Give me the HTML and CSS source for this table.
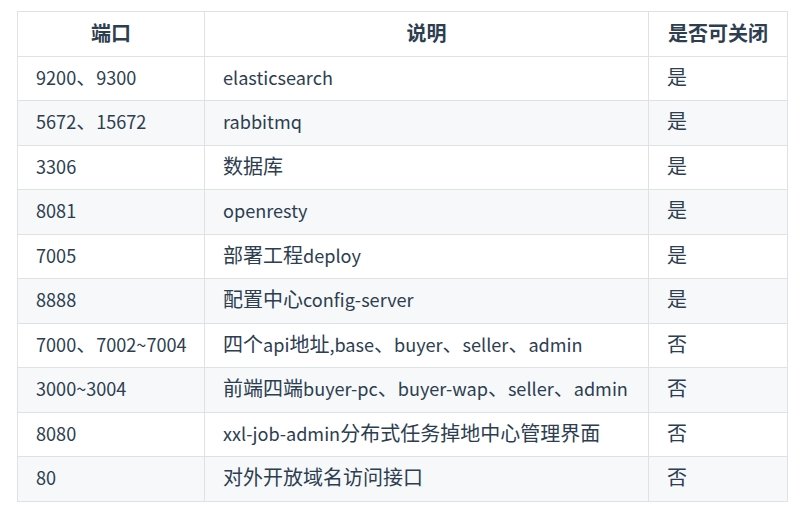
FILE: index.html
```html
<!DOCTYPE html>
<html lang="zh-CN">
<head>
<meta charset="utf-8">
<link rel="stylesheet" href="styles.css">
</head>
<body>
<div class="page">
<table class="ports">
  <colgroup>
    <col class="c1">
    <col class="c2">
    <col class="c3">
  </colgroup>
  <thead>
    <tr><th>端口</th><th>说明</th><th>是否可关闭</th></tr>
  </thead>
  <tbody>
    <tr><td>9200<span class="zh">、</span>9300</td><td>elasticsearch</td><td><span class="zh">是</span></td></tr>
    <tr><td>5672<span class="zh">、</span>15672</td><td>rabbitmq</td><td><span class="zh">是</span></td></tr>
    <tr><td>3306</td><td><span class="zh">数据库</span></td><td><span class="zh">是</span></td></tr>
    <tr><td>8081</td><td>openresty</td><td><span class="zh">是</span></td></tr>
    <tr><td>7005</td><td><span class="zh">部署工程</span>deploy</td><td><span class="zh">是</span></td></tr>
    <tr><td>8888</td><td><span class="zh">配置中心</span>config-server</td><td><span class="zh">是</span></td></tr>
    <tr><td>7000<span class="zh">、</span>7002~7004</td><td><span class="zh">四个</span>api<span class="zh">地址</span>,base<span class="zh">、</span>buyer<span class="zh">、</span>seller<span class="zh">、</span>admin</td><td><span class="zh">否</span></td></tr>
    <tr><td>3000~3004</td><td><span class="zh">前端四端</span>buyer-pc<span class="zh">、</span>buyer-wap<span class="zh">、</span>seller<span class="zh">、</span>admin</td><td><span class="zh">否</span></td></tr>
    <tr><td>8080</td><td>xxl-job-admin<span class="zh">分布式任务掉地中心管理界面</span></td><td><span class="zh">否</span></td></tr>
    <tr><td>80</td><td><span class="zh">对外开放域名访问接口</span></td><td><span class="zh">否</span></td></tr>
  </tbody>
</table>
</div>
</body>
</html>
```
FILE: styles.css
```css
html, body {
  margin: 0;
  padding: 0;
  background: #ffffff;
}
.page {
  padding: 11px 0 0 17px;
}
.ports {
  border-collapse: collapse;
  table-layout: fixed;
  width: 770px;
  font-family: "Noto Sans CJK SC", "Noto Sans", sans-serif;
  font-size: 18.1px;
  color: #2c3e50;
}
.c1 { width: 187px; }
.c2 { width: 444px; }
.c3 { width: 139px; }
.ports th,
.ports td {
  border: 1px solid #dfe2e5;
  padding: 7px 18px 9px;
  line-height: 27.5px;
  white-space: nowrap;
}
.ports th {
  font-size: 20px;
  font-weight: 700;
  text-align: center;
}
.ports td {
  text-align: left;
  font-weight: 400;
}
.zh {
  font-size: 20px;
  line-height: 0;
}
.ports tbody tr:nth-child(even) {
  background: #f6f8fa;
}
```
